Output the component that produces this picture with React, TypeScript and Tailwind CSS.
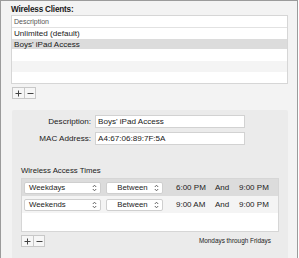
import React from "react";

const font = { fontFamily: '"Liberation Sans", Arial, sans-serif' };

function Updown() {
  return (
    <svg width="5" height="8" viewBox="0 0 5 8" className="shrink-0">
      <path d="M0.8 3 L2.5 1.2 L4.2 3" fill="none" stroke="#555" strokeWidth="0.9" />
      <path d="M0.8 5 L2.5 6.8 L4.2 5" fill="none" stroke="#555" strokeWidth="0.9" />
    </svg>
  );
}

function Popup({ label, w, center }: { label: string; w: string; center?: boolean }) {
  return (
    <div
      className={`${w} h-[12px] bg-white border border-[#cfcfcf] rounded-[2px] flex items-center pl-[4px] pr-[3px] text-[7.8px] leading-[10px] text-[#222]`}
    >
      <span className={center ? "flex-1 text-center" : "flex-1"}>{label}</span>
      <Updown />
    </div>
  );
}

function PlusMinus() {
  return (
    <div className="flex border border-[#c8c8c8] bg-[#f6f6f6] h-[12px] w-[24px]">
      <div className="w-[12px] flex items-center justify-center border-r border-[#c8c8c8]">
        <svg width="7" height="7" viewBox="0 0 7 7">
          <path d="M3.5 0.5 V6.5 M0.5 3.5 H6.5" stroke="#444" strokeWidth="1" />
        </svg>
      </div>
      <div className="flex-1 flex items-center justify-center">
        <svg width="7" height="7" viewBox="0 0 7 7">
          <path d="M0.5 3.5 H6.5" stroke="#444" strokeWidth="1" />
        </svg>
      </div>
    </div>
  );
}

export default function App() {
  return (
    <div style={font} className="w-[299px] h-[258px] bg-white overflow-hidden">
      <div className="w-[298px] h-[258px] bg-[#f3f3f3] border-l border-t border-r border-[#9b9b9b] pl-[10px] pr-[9px] flex flex-col">
        <div className="h-[14px] text-[8.2px] font-bold text-[#1a1a1a] pt-[3px] leading-[11px] tracking-[-0.2px]">
          Wireless Clients:
        </div>
        <div className="border border-[#d6d6d6] bg-white h-[69px] flex flex-col">
          <div className="h-[12px] border-b border-[#e2e2e2] text-[7px] text-[#555] pl-[2px] flex items-center leading-[10px]">
            Description
          </div>
          <div className="h-[11px] text-[8.1px] leading-[11px] text-[#1a1a1a] pl-[2px] flex items-center">Unlimited (default)</div>
          <div className="h-[10px] text-[8.1px] leading-[11px] text-[#1a1a1a] pl-[2px] flex items-center bg-[#dcdcdc]">
            Boys' iPad Access
          </div>
          <div className="h-[12px]" />
          <div className="h-[11px] bg-[#f4f4f4]" />
          <div className="flex-1" />
        </div>
        <div className="mt-[3px] pl-[1px]">
          <PlusMinus />
        </div>
        <div className="mt-[11px] flex-1 bg-[#ebebeb] rounded-t-[2px] ml-[1px] px-[9px] pt-[5px] flex flex-col">
          <div className="flex items-center h-[13px]">
            <div className="w-[74px] text-right text-[8.1px] leading-[11px] text-[#1a1a1a] pr-[4px]">Description:</div>
            <div className="w-[150px] h-[13px] bg-white border border-[#d2d2d2] text-[8.1px] leading-[11px] text-[#1a1a1a] pl-[2px] flex items-center">
              Boys' iPad Access
            </div>
          </div>
          <div className="flex items-center h-[13px] mt-[4px]">
            <div className="w-[74px] text-right text-[8.1px] leading-[11px] text-[#1a1a1a] pr-[4px]">MAC Address:</div>
            <div className="w-[150px] h-[13px] bg-white border border-[#d2d2d2] text-[8.1px] leading-[11px] text-[#1a1a1a] pl-[2px] flex items-center">
              A4:67:06:89:7F:5A
            </div>
          </div>
          <div className="mt-[21px] h-[12px] text-[7.8px] text-[#1a1a1a] leading-[10px]">Wireless Access Times</div>
          <div className="border border-[#d6d6d6] bg-white h-[54px] flex flex-col">
            <div className="h-[17px] bg-[#dcdcdc] flex items-center pl-[2px] text-[8px] text-[#222]">
              <Popup label="Weekdays" w="w-[77px]" />
              <div className="w-[5px]" />
              <Popup label="Between" w="w-[57px]" center />
              <span className="ml-[13px] w-[39px]">6:00 PM</span>
              <span className="w-[24px]">And</span>
              <span>9:00 PM</span>
            </div>
            <div className="h-[17px] bg-[#f4f4f4] flex items-center pl-[2px] text-[8px] text-[#222]">
              <Popup label="Weekends" w="w-[77px]" />
              <div className="w-[5px]" />
              <Popup label="Between" w="w-[57px]" center />
              <span className="ml-[13px] w-[39px]">9:00 AM</span>
              <span className="w-[24px]">And</span>
              <span>9:00 PM</span>
            </div>
            <div className="flex-1" />
          </div>
          <div className="mt-[3px] flex items-center">
            <PlusMinus />
            <div className="flex-1 text-right pr-[8px] text-[6.4px] text-[#222]">Mondays through Fridays</div>
          </div>
        </div>
      </div>
    </div>
  );
}
